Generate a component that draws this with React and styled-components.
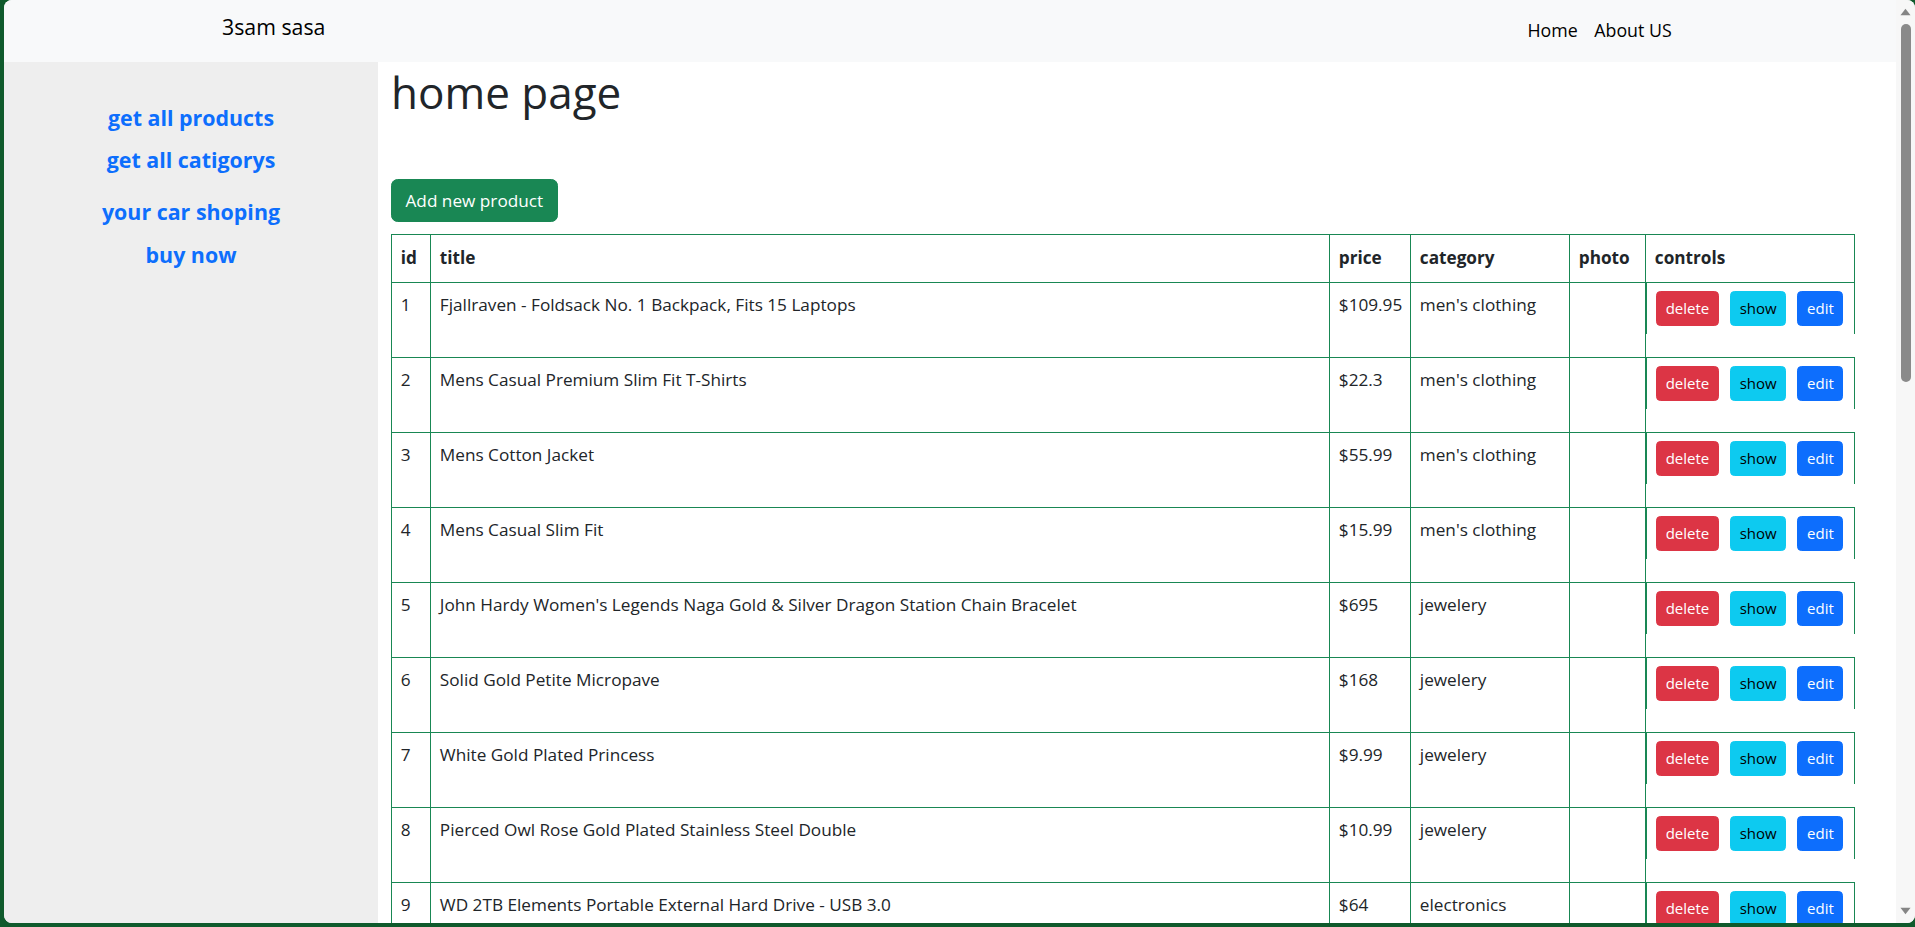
import React from 'react'
import styled, { createGlobalStyle } from 'styled-components'

const products = [
  { id: 1, title: 'Fjallraven - Foldsack No. 1 Backpack, Fits 15 Laptops', price: 109.95, category: "men's clothing" },
  { id: 2, title: 'Mens Casual Premium Slim Fit T-Shirts', price: 22.3, category: "men's clothing" },
  { id: 3, title: 'Mens Cotton Jacket', price: 55.99, category: "men's clothing" },
  { id: 4, title: 'Mens Casual Slim Fit', price: 15.99, category: "men's clothing" },
  { id: 5, title: "John Hardy Women's Legends Naga Gold & Silver Dragon Station Chain Bracelet", price: 695, category: 'jewelery' },
  { id: 6, title: 'Solid Gold Petite Micropave', price: 168, category: 'jewelery' },
  { id: 7, title: 'White Gold Plated Princess', price: 9.99, category: 'jewelery' },
  { id: 8, title: 'Pierced Owl Rose Gold Plated Stainless Steel Double', price: 10.99, category: 'jewelery' },
  { id: 9, title: 'WD 2TB Elements Portable External Hard Drive - USB 3.0', price: 64, category: 'electronics' },
  { id: 10, title: 'SanDisk SSD PLUS 1TB Internal SSD - SATA III 6 Gb/s', price: 109, category: 'electronics' }
]

const sideLinks = [
  { label: 'get all products', space: 0 },
  { label: 'get all catigorys', space: 10 },
  { label: 'your car shoping', space: 20 },
  { label: 'buy now', space: 11 }
]

const App = () => {
  return (
    <>
      <GlobalStyle />
      <Window>
        <Page>
          <Navbar>
            <Brand>3sam sasa</Brand>
            <NavLinks>
              <NavLink>Home</NavLink>
              <NavLink>About US</NavLink>
            </NavLinks>
          </Navbar>
          <Body>
            <Sidebar>
              {sideLinks.map((l) => (
                <SideLink key={l.label} $space={l.space}>
                  {l.label}
                </SideLink>
              ))}
            </Sidebar>
            <Main>
              <Title>home page</Title>
              <AddButton>Add new product</AddButton>
              <Table>
                <colgroup>
                  <col style={{ width: 39 }} />
                  <col style={{ width: 899 }} />
                  <col style={{ width: 81 }} />
                  <col style={{ width: 159 }} />
                  <col style={{ width: 76 }} />
                  <col style={{ width: 209 }} />
                </colgroup>
                <thead>
                  <tr>
                    <Th>id</Th>
                    <Th>title</Th>
                    <Th>price</Th>
                    <Th>category</Th>
                    <Th>photo</Th>
                    <Th>controls</Th>
                  </tr>
                </thead>
                <tbody>
                  {products.map((p) => (
                    <Row key={p.id}>
                      <Td>{p.id}</Td>
                      <Td>{p.title}</Td>
                      <Td>${p.price}</Td>
                      <Td>{p.category}</Td>
                      <Td />
                      <ControlsCell>
                        <Controls>
                          <SmallButton $bg='#dc3545' $color='#fff'>delete</SmallButton>
                          <SmallButton $bg='#0dcaf0' $color='#000'>show</SmallButton>
                          <SmallButton $bg='#0d6efd' $color='#fff'>edit</SmallButton>
                        </Controls>
                      </ControlsCell>
                    </Row>
                  ))}
                </tbody>
              </Table>
            </Main>
          </Body>
        </Page>
        <Scrollbar>
          <Arrow viewBox='0 0 12 8'>
            <path d='M6 0.5 L11.5 7.5 L0.5 7.5 Z' />
          </Arrow>
          <Thumb />
          <Track />
          <Arrow viewBox='0 0 12 8'>
            <path d='M0.5 0.5 L11.5 0.5 L6 7.5 Z' />
          </Arrow>
        </Scrollbar>
      </Window>
    </>
  )
}

export default App

// STYLING
const GlobalStyle = createGlobalStyle`
  html, body {
    margin: 0;
    height: 100%;
    overflow: hidden;
  }
  body {
    background: #0f5a2c;
    font-family: "Open Sans", "Noto Sans", sans-serif;
    color: #212529;
  }
`

const Window = styled.div`
  display: flex;
  height: calc(100vh - 4px);
  margin-left: 4px;
  border-radius: 8px;
  overflow: hidden;
  background: #fff;
`

const Page = styled.div`
  flex: 1;
  min-width: 0;
  display: flex;
  flex-direction: column;
`

const Navbar = styled.nav`
  height: 62px;
  flex-shrink: 0;
  background: #f8f9fa;
  display: flex;
  align-items: center;
  justify-content: space-between;
  padding: 0 216px 0 218px;
`

const Brand = styled.div`
  font-size: 21.3px;
  line-height: 33px;
  color: #000;
  padding-bottom: 9px;
`

const NavLinks = styled.div`
  display: flex;
  padding-bottom: 2px;
`

const NavLink = styled.div`
  font-size: 17.8px;
  line-height: 26px;
  padding: 0 8.3px;
  color: #000;
`

const Body = styled.div`
  flex: 1;
  min-height: 0;
  display: flex;
`

const Sidebar = styled.aside`
  width: 374px;
  flex-shrink: 0;
  background: #eeeeee;
  display: flex;
  flex-direction: column;
  align-items: center;
  padding-top: 40px;
`

const SideLink = styled.div`
  margin-top: ${(p) => p.$space}px;
  font-size: 21.4px;
  line-height: 32px;
  font-weight: 700;
  color: #0d6efd;
`

const Main = styled.main`
  flex: 1;
  min-width: 0;
  padding: 0 0 0 13px;
  overflow: hidden;
`

const Title = styled.h1`
  margin: 2px 0 0;
  font-size: 44px;
  line-height: 1.3;
  font-weight: 500;
`

const AddButton = styled.button`
  display: block;
  margin-top: 58px;
  height: 43px;
  padding: 0 13.5px;
  border: 1px solid #198754;
  border-radius: 6.6px;
  background: #198754;
  color: #fff;
  font-family: inherit;
  font-size: 17.2px;
`

const Table = styled.table`
  margin-top: 12px;
  width: 1463px;
  table-layout: fixed;
  border-collapse: collapse;
  font-size: 17.2px;
  line-height: 26.4px;
`

const Th = styled.th`
  text-align: left;
  font-weight: 700;
  padding: 10px 8.8px;
  border: 1px solid #198754;
`

const Row = styled.tr`
  height: 75px;
  border-top: 1px solid #198754;
  border-bottom: 1px solid #198754;
`

const Td = styled.td`
  vertical-align: top;
  padding: 9px 8.8px;
  border-left: 1px solid #198754;
  border-right: 1px solid #198754;
  white-space: nowrap;
  overflow: hidden;
`

const ControlsCell = styled.td`
  vertical-align: top;
  padding: 0;
  border-left: 1px solid #198754;
`

const Controls = styled.div`
  display: flex;
  gap: 11px;
  padding: 8px 9px 8px 9px;
  border-left: 1px solid #198754;
  border-right: 1px solid #198754;
`

const SmallButton = styled.button`
  height: 35px;
  padding: 0 8.7px;
  border: 1px solid ${(p) => p.$bg};
  border-radius: 4.4px;
  background: ${(p) => p.$bg};
  color: ${(p) => p.$color};
  font-family: inherit;
  font-size: 15px;
`

const Scrollbar = styled.div`
  width: 19px;
  flex-shrink: 0;
  background: #f7f7f7;
  display: flex;
  flex-direction: column;
  align-items: center;
  padding: 8px 0 8px;
`

const Arrow = styled.svg`
  width: 11px;
  height: 8px;
  fill: #858585;
  flex-shrink: 0;
`

const Thumb = styled.div`
  margin-top: 8px;
  width: 10px;
  height: 358px;
  border-radius: 5px;
  background: #8a8a8a;
`

const Track = styled.div`
  flex: 1;
`
